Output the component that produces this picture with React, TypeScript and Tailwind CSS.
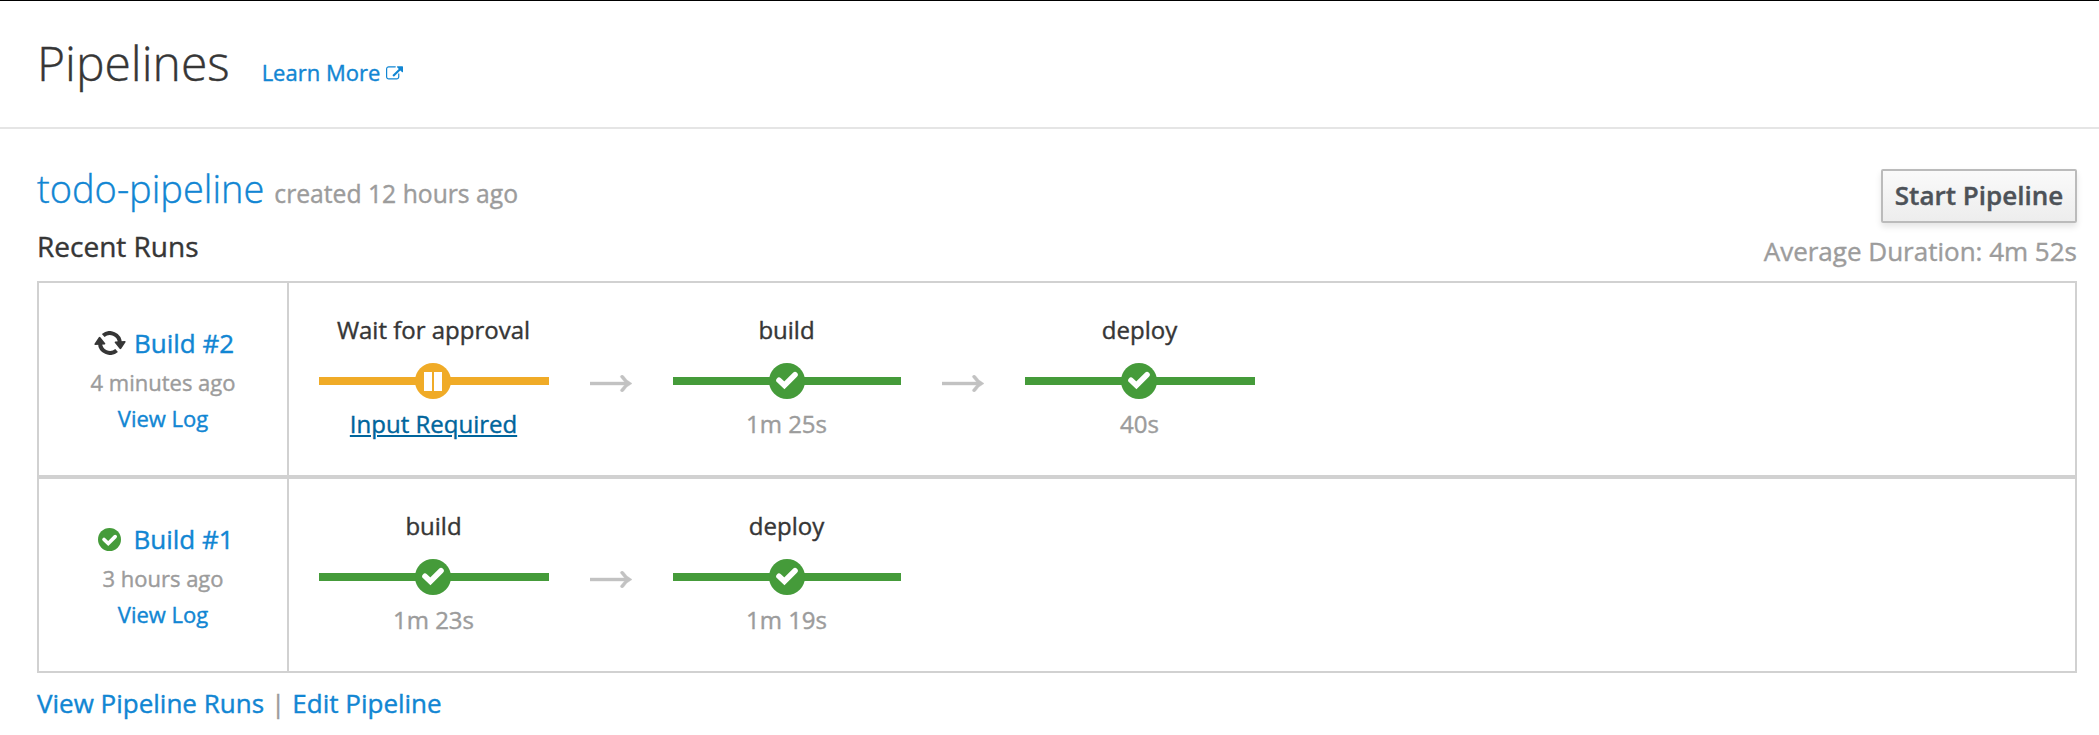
import React from 'react';

type Status = 'paused' | 'success';
type Stage = { name: string; status: Status; detail: string };
type Run = { title: string; running?: boolean; age: string; stages: Stage[] };

const runs: Run[] = [
  {
    title: 'Build #2',
    running: true,
    age: '4 minutes ago',
    stages: [
      { name: 'Wait for approval', status: 'paused', detail: 'Input Required' },
      { name: 'build', status: 'success', detail: '1m 25s' },
      { name: 'deploy', status: 'success', detail: '40s' },
    ],
  },
  {
    title: 'Build #1',
    age: '3 hours ago',
    stages: [
      { name: 'build', status: 'success', detail: '1m 23s' },
      { name: 'deploy', status: 'success', detail: '1m 19s' },
    ],
  },
];

function ExternalLinkIcon() {
  return (
    <svg viewBox="0 0 1792 1536" className="h-[15px] w-[17px]" fill="currentColor">
      <path d="M1408 800v320q0 119-84.500 203.500t-203.500 84.500h-832q-119 0-203.500-84.500t-84.500-203.500v-832q0-119 84.500-203.500t203.500-84.500h704q14 0 23 9t9 23v64q0 14-9 23t-23 9h-704q-66 0-113 47t-47 113v832q0 66 47 113t113 47h832q66 0 113-47t47-113v-320q0-14 9-23t23-9h64q14 0 23 9t9 23zM1792 64v512q0 26-19 45t-45 19-45-19l-176-176-652 652q-10 10-23 10t-23-10l-114-114q-10-10-10-23t10-23l652-652-176-176q-19-19-19-45t19-45 45-19h512q26 0 45 19t19 45z" />
    </svg>
  );
}

function RunningIcon() {
  return (
    <svg viewBox="0 0 32 24" className="h-6 w-8" fill="none">
      <path d="M9.200 4.600A10 10 0 0 1 25.800 12" stroke="#363636" strokeWidth="4" />
      <path d="M22.600 19.400A10 10 0 0 1 6 12" stroke="#363636" strokeWidth="4" />
      <path d="M20.800 11.800q-.6-.9.500-1.200l9.700-.6q1 .2.500 1.200l-4.300 6.600q-.8.900-1.600 0zM11.200 12.200q.6.900-.5 1.200l-9.700.6q-1-.2-.5-1.200l4.300-6.600q.8-.9 1.600 0z" fill="#363636" />
    </svg>
  );
}

function SuccessIcon() {
  return (
    <svg viewBox="0 0 24 24" className="h-[23px] w-[23px]">
      <circle cx="12" cy="12" r="12" fill="#459b3a" />
      <path d="M6.300 12l4.400 4.200 7.200-7.200" fill="none" stroke="#fff" strokeWidth="3.800" strokeLinecap="round" />
    </svg>
  );
}

function StageMarker({ status }: { status: Status }) {
  return (
    <svg viewBox="0 0 36 36" className="h-9 w-9">
      <circle cx="18" cy="18" r="18" className={status === 'paused' ? 'fill-[#f0ab27]' : 'fill-[#459b3a]'} />
      {status === 'paused' ? (
        <path d="M9 9h8v19H9zM19 9h8v19h-8z" fill="#fff" />
      ) : (
        <path d="M10 17.300l5.400 5L26 11.800" fill="none" stroke="#fff" strokeWidth="5.600" strokeLinecap="round" />
      )}
    </svg>
  );
}

function Arrow() {
  return (
    <svg viewBox="0 0 42 17" className="mt-[92px] h-[17px] w-[42px] shrink-0">
      <path d="M0 7h34.500L30.800 2.600q-.9-1.500.3-2.200 1.300-.8 2.600.6Q36.500 5.700 42 8.500q-5.500 2.800-8.300 7.500-1.300 1.400-2.600.6-1.200-.7-.3-2.200L34.500 10H0z" fill="#c2c2c2" stroke="#c2c2c2" strokeWidth=".4" />
    </svg>
  );
}

function StageColumn({ stage, first }: { stage: Stage; first: boolean }) {
  const paused = stage.status === 'paused';
  return (
    <div className={`flex shrink-0 flex-col items-center pt-[30px] text-2xl leading-[34px] ${first ? 'w-[230px]' : 'w-[228px]'}`}>
      <div className="pr-px text-[#363636]">{stage.name}</div>
      <div className="mt-4 grid w-full items-center justify-items-center">
        <div className={`col-start-1 row-start-1 h-2 w-full ${paused ? 'bg-[#f0ab27]' : 'bg-[#459b3a]'}`} />
        <div className={`col-start-1 row-start-1 h-9 ${first ? 'pr-0.5' : ''}`}>
          <StageMarker status={stage.status} />
        </div>
      </div>
      <div className="mt-2 pr-px">
        {paused ? (
          <a href="#" className="text-[#00659c] underline decoration-2 underline-offset-2">{stage.detail}</a>
        ) : (
          <span className="text-[#9c9c9c]">{stage.detail}</span>
        )}
      </div>
    </div>
  );
}

function RunRow({ run }: { run: Run }) {
  return (
    <div className="flex h-[196px] border-2 border-[#d1d1d1]">
      <div className="flex w-[250px] shrink-0 flex-col items-center border-r-2 border-[#d1d1d1] pt-[42px] text-[22px] leading-9">
        <div className={`flex h-9 items-center text-[26px] ${run.running ? 'pl-0.5' : 'pl-1.5'}`}>
          {run.running ? <RunningIcon /> : <SuccessIcon />}
          <a href="#" className={run.running ? 'ml-2' : 'ml-3'}>{run.title}</a>
        </div>
        <div className="mt-[3px] text-[#9c9c9c]">{run.age}</div>
        <a href="#">View Log</a>
      </div>
      <div className="flex pl-[30px]">
        {run.stages.map((stage, i) => (
          <React.Fragment key={stage.name}>
            {i > 0 && <div className="flex w-[124px] justify-center"><Arrow /></div>}
            <StageColumn stage={stage} first={i % 2 === 0} />
          </React.Fragment>
        ))}
      </div>
    </div>
  );
}

export default function App() {
  return (
    <div className="h-[735px] overflow-hidden border-t border-black bg-white font-['Open_Sans',sans-serif] text-[#1186d3] [-webkit-text-stroke:0.4px] [&_a]:whitespace-nowrap">
      <header className="flex h-32 items-baseline border-b-2 border-[#e5e5e5] pt-[30px] pl-[37px]">
        <h1 className="text-5xl leading-[64px] font-light text-[#363636]">Pipelines</h1>
        <a href="#" className="ml-8 flex items-baseline gap-1.5 text-[22px]">
          Learn More <ExternalLinkIcon />
        </a>
      </header>
      <main className="pr-[22px] pl-[37px]">
        <div className="flex justify-between">
          <div className="pt-[35px]">
            <div className="flex items-baseline gap-[10px]">
              <h2 className="text-[38px] leading-[48px] font-light"><a href="#">todo-pipeline</a></h2>
              <span className="text-[24.700px] text-[#9c9c9c]">created 12 hours ago</span>
            </div>
            <h3 className="mt-4 text-[28px] leading-9 text-[#363636]">Recent Runs</h3>
          </div>
          <div className="flex h-[141px] flex-col items-end pt-10">
            <button className="h-[54px] w-[196px] rounded-[2px] border-2 border-[#bbb] bg-linear-to-b from-[#fafafa] to-[#ededed] pb-0.5 text-[26px] leading-[48px] font-semibold text-[#4d5258] shadow-[0_4px_6px_rgba(3,3,3,0.1)]">
              Start Pipeline
            </button>
            <div className="mt-[10px] text-[26px] leading-9 text-[#9c9c9c]">Average Duration: 4m 52s</div>
          </div>
        </div>
        <section className="mt-[11px]">
          {runs.map((run) => <RunRow key={run.title} run={run} />)}
        </section>
        <footer className="mt-3 flex gap-[7px] text-[26px] leading-9">
          <a href="#">View Pipeline Runs</a>
          <span className="text-[#9c9c9c]">|</span>
          <a href="#">Edit Pipeline</a>
        </footer>
      </main>
    </div>
  );
}
